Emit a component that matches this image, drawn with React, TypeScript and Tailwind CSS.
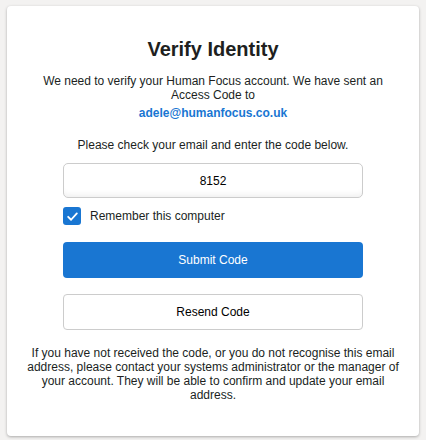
import { useState } from "react";

export default function App() {
    const [code, setCode] = useState("8152");
    const [remember, setRemember] = useState(true);

    return (
        <div
            className="min-h-[440px] bg-[#f3f2f1] pt-[6px] text-[#201f1e]"
            style={{ fontFamily: '"Liberation Sans", Arial, sans-serif' }}
        >
            <div className="mx-[7px] w-[412px] rounded-[4px] bg-white px-4 pt-8 pb-[34px] shadow-[0_1px_3px_rgba(0,0,0,0.3)]">
                <h1 className="text-center text-[20px] leading-[23px] font-bold">
                    Verify Identity
                </h1>

                <p className="mt-[13px] px-4 text-center text-[12px] leading-[14px]">
                    We need to verify your Human Focus account. We have sent an
                    Access Code to
                </p>
                <p className="mt-1 text-center text-[12px] leading-[14px] font-bold text-[#1976d2]">
                    adele@humanfocus.co.uk
                </p>

                <p className="mt-[18px] text-center text-[12px] leading-[14px]">
                    Please check your email and enter the code below.
                </p>

                <div className="mx-auto mt-[11px] w-[300px]">
                    <input
                        value={code}
                        onChange={(e) => setCode(e.target.value)}
                        className="block h-[35px] w-full rounded-[5px] border border-[#cccccc] bg-white text-center text-[12px] text-black shadow-[inset_0_-7px_6px_-5px_rgba(0,0,0,0.07)] outline-none"
                    />

                    <label className="mt-[9px] flex cursor-pointer items-center gap-[9px] text-[12px] leading-[14px]">
                        <span
                            onClick={() => setRemember(!remember)}
                            className="flex h-[18px] w-[18px] items-center justify-center rounded-[3px] bg-[#1976d2]"
                        >
                            {remember && (
                                <svg width="13" height="13" viewBox="0 0 12 12" fill="none">
                                    <path
                                        d="M2 6.3 L4.7 9 L10 3.2"
                                        stroke="white"
                                        strokeWidth="1.7"
                                        strokeLinecap="round"
                                        strokeLinejoin="round"
                                    />
                                </svg>
                            )}
                        </span>
                        Remember this computer
                    </label>

                    <button className="mt-[17px] block h-[36px] w-full rounded-[4px] bg-[#1976d2] text-[12px] text-white">
                        Submit Code
                    </button>

                    <button className="mt-4 block h-[36px] w-full rounded-[4px] border border-[#cccccc] bg-white text-[12px] text-black">
                        Resend Code
                    </button>
                </div>

                <p className="mt-4 text-center text-[12px] leading-[14px]">
                    If you have not received the code, or you do not recognise
                    this email address, please contact your systems administrator
                    or the manager of your account. They will be able to confirm
                    and update your email address.
                </p>
            </div>
        </div>
    );
}
